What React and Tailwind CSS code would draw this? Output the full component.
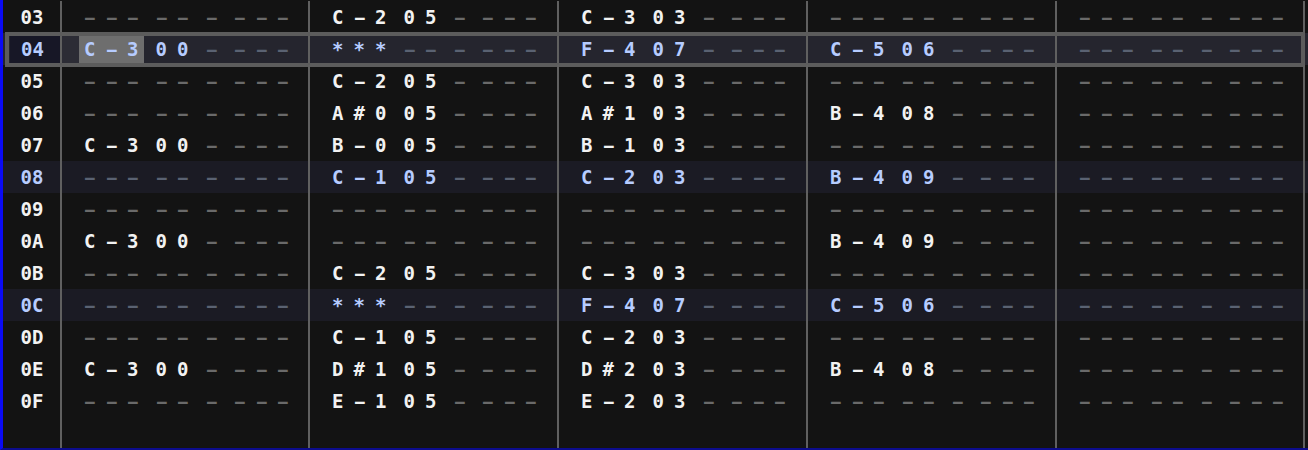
import React from "react";

// row label, then [note, instrument] per channel ("" = empty)
const ROWS = [
  ["03", [["", ""], ["C-2", "05"], ["C-3", "03"], ["", ""], ["", ""]]],
  ["04", [["C-3", "00"], ["***", ""], ["F-4", "07"], ["C-5", "06"], ["", ""]]],
  ["05", [["", ""], ["C-2", "05"], ["C-3", "03"], ["", ""], ["", ""]]],
  ["06", [["", ""], ["A#0", "05"], ["A#1", "03"], ["B-4", "08"], ["", ""]]],
  ["07", [["C-3", "00"], ["B-0", "05"], ["B-1", "03"], ["", ""], ["", ""]]],
  ["08", [["", ""], ["C-1", "05"], ["C-2", "03"], ["B-4", "09"], ["", ""]]],
  ["09", [["", ""], ["", ""], ["", ""], ["", ""], ["", ""]]],
  ["0A", [["C-3", "00"], ["", ""], ["", ""], ["B-4", "09"], ["", ""]]],
  ["0B", [["", ""], ["C-2", "05"], ["C-3", "03"], ["", ""], ["", ""]]],
  ["0C", [["", ""], ["***", ""], ["F-4", "07"], ["C-5", "06"], ["", ""]]],
  ["0D", [["", ""], ["C-1", "05"], ["C-2", "03"], ["", ""], ["", ""]]],
  ["0E", [["C-3", "00"], ["D#1", "05"], ["D#2", "03"], ["B-4", "08"], ["", ""]]],
  ["0F", [["", ""], ["E-1", "05"], ["E-2", "03"], ["", ""], ["", ""]]],
];

const CURSOR_ROW = "04";
const HILITE_ROWS = ["08", "0C"];
const CH_WIDTHS = ["w-[248px]", "w-[249px]", "w-[249px]", "w-[249px]", "w-[250px] border-r-2"];

const Field = ({ text, len, main, dim, className = "" }) => {
  const chars = text ? text.split("") : Array(len).fill("-");
  return (
    <div className={`flex h-full items-center ${className}`}>
      {chars.map((c, i) => (
        <span
          key={i}
          className={`inline-block w-[21.5px] text-center ${text ? main : dim} ${c === "-" ? "scale-x-[0.85]" : ""}`}
        >
          {c === "-" ? "–" : c}
        </span>
      ))}
    </div>
  );
};

const Channel = ({ data, width, main, dim, cursor }) => {
  const [note, inst] = data;
  return (
    <div className={`flex h-full items-center border-l-2 border-[#606060] ${width}`}>
      <div className={`h-full w-[17px] ${cursor ? "bg-[#2c2c35]" : ""}`} />
      <Field text={note} len={3} main={main} dim={dim} className={cursor ? "bg-[#6e6e6e]" : ""} />
      <Field text={inst} len={2} main={main} dim={dim} className="ml-[7px]" />
      <Field text="" len={1} main={main} dim={dim} className="ml-[7px]" />
      <Field text="" len={3} main={main} dim={dim} className="ml-[7px]" />
    </div>
  );
};

export default function App() {
  return (
    <div className="flex h-[450px] w-[1308px] flex-col border-b-2 border-l-[3px] border-b-[#0c0c8c] border-l-[#0a0af5] bg-[#131313] pt-[1px] font-['DejaVu_Sans_Mono',monospace] text-[19px] font-bold leading-none">
      {ROWS.map(([label, chans]) => {
        const isCursor = label === CURSOR_ROW;
        const isHi = HILITE_ROWS.includes(label);
        const rowBg = isCursor ? "bg-[#25252e]" : isHi ? "bg-[#1b1b24]" : "";
        const main = isCursor || isHi ? "text-[#b6ccff]" : "text-[#f2f2f2]";
        const dim = isCursor || isHi ? "text-[#5a6272]" : "text-[#6a6a6a]";
        return (
          <div key={label} className={`relative flex h-[32px] shrink-0 items-center ${rowBg}`}>
            <div className="flex h-full w-[57px] items-center">
              {isCursor ? (
                <span className="ml-[7px] flex h-[27px] w-[50px] items-center justify-center bg-[#171726] pr-[5px] text-[#b6ccff]">
                  {label}
                </span>
              ) : (
                <span className={`w-full pl-[1px] text-center ${isHi ? "text-[#b6ccff]" : "text-[#f2f2f2]"}`}>
                  {label}
                </span>
              )}
            </div>
            {chans.map((c, i) => (
              <Channel
                key={i}
                data={c}
                width={CH_WIDTHS[i]}
                main={main}
                dim={dim}
                cursor={isCursor && i === 0}
              />
            ))}
            {isCursor && (
              <div className="pointer-events-none absolute -bottom-[2px] -top-[1px] left-[2px] right-[3px] border-[4px] border-[#5c5c5c]" />
            )}
          </div>
        );
      })}
      <div className="flex flex-1">
        <div className="w-[57px]" />
        {CH_WIDTHS.map((w, i) => (
          <div key={i} className={`h-full border-l-2 border-[#606060] ${w}`} />
        ))}
      </div>
    </div>
  );
}
